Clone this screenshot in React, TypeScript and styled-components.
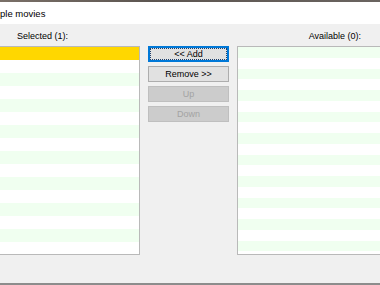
import React from "react";
import styled, { createGlobalStyle } from "styled-components";

const Global = createGlobalStyle`
  html, body { margin: 0; padding: 0; background: #f0f0f0; }
  body { font-family: "Liberation Sans", Arial, sans-serif; }
`;

const Screen = styled.div`
  width: 380px;
  height: 285px;
  overflow: hidden;
  display: flex;
  flex-direction: column;
  background: #f0f0f0;
`;

const TopStrip = styled.div`
  height: 2px;
  background: linear-gradient(90deg, #7a7068, #5c5550 40%, #6a6460);
`;

const TitleBar = styled.div`
  height: 22px;
  background: #ffffff;
  display: flex;
  align-items: center;
  font-size: 9.5px;
  color: #000;
  padding-left: 0;
`;

const Content = styled.div`
  flex: 1;
  display: grid;
  grid-template-columns: 140px 97px 160px;
  grid-template-rows: 22px 209px;
  background: #f0f0f0;
`;

const BottomLine = styled.div`
  height: 2px;
  background: #8c8c8c;
`;

const Label = styled.div<{ $align: "left" | "right" }>`
  font-size: 9px;
  color: #000;
  display: flex;
  align-items: flex-end;
  padding-bottom: 5px;
  justify-content: ${(p) => (p.$align === "left" ? "flex-start" : "flex-end")};
  padding-left: ${(p) => (p.$align === "left" ? "17px" : "0")};
  padding-right: ${(p) => (p.$align === "right" ? "18px" : "0")};
  box-sizing: border-box;
  width: ${(p) => (p.$align === "right" ? "142px" : "auto")};
`;

const ListBox = styled.div<{ $trimLeft?: boolean }>`
  border: 1px solid #b9b9b9;
  border-left-width: ${(p) => (p.$trimLeft ? "0" : "1px")};
  background: #ffffff;
  overflow: hidden;
  display: flex;
  flex-direction: column;
`;

const Row = styled.div<{ $h: number; $even: boolean; $selected?: boolean }>`
  flex: none;
  height: ${(p) => p.$h}px;
  background: ${(p) =>
    p.$selected ? "#ffd700" : p.$even ? "#f0fff0" : "#ffffff"};
`;

const ButtonColumn = styled.div`
  padding-left: 8px;
  padding-right: 8px;
  display: flex;
  flex-direction: column;
  gap: 4px;
`;

const Button = styled.button<{ $variant: "focus" | "normal" | "disabled" }>`
  position: relative;
  height: 16px;
  width: 81px;
  margin: 0;
  padding: 0;
  font-family: "Liberation Sans", Arial, sans-serif;
  font-size: 9px;
  line-height: 14px;
  text-align: center;
  cursor: default;
  color: ${(p) => (p.$variant === "disabled" ? "#a3a3a3" : "#000")};
  background: ${(p) => (p.$variant === "disabled" ? "#cccccc" : "#e1e1e1")};
  border: 1px solid
    ${(p) =>
      p.$variant === "focus"
        ? "#0078d7"
        : p.$variant === "disabled"
        ? "#bfbfbf"
        : "#adadad"};
  box-shadow: ${(p) => (p.$variant === "focus" ? "inset 0 0 0 1px #0078d7" : "none")};
  &::after {
    content: "";
    display: ${(p) => (p.$variant === "focus" ? "block" : "none")};
    position: absolute;
    inset: 1px;
    border: 1px dotted #1f3f6a;
  }
`;

const RightCell = styled.div`
  display: flex;
`;

const RightList = styled(ListBox)`
  width: 150px;
`;

export default function App() {
  const leftRows = Array.from({ length: 17 });
  const rightRows = Array.from({ length: 20 });
  return (
    <>
      <Global />
      <Screen>
        <TopStrip />
        <TitleBar>ple movies</TitleBar>
        <Content>
          <Label $align="left">Selected (1):</Label>
          <div />
          <Label $align="right">Available (0):</Label>
          <ListBox $trimLeft>
            {leftRows.map((_, i) => (
              <Row key={i} $h={13} $even={i % 2 === 0} $selected={i === 0} />
            ))}
          </ListBox>
          <ButtonColumn>
            <Button $variant="focus">&lt;&lt; Add</Button>
            <Button $variant="normal">Remove &gt;&gt;</Button>
            <Button $variant="disabled" disabled>
              Up
            </Button>
            <Button $variant="disabled" disabled>
              Down
            </Button>
          </ButtonColumn>
          <RightCell>
            <RightList>
              {rightRows.map((_, i) => (
                <Row key={i} $h={10.75} $even={i % 2 === 0} />
              ))}
            </RightList>
          </RightCell>
        </Content>
        <BottomLine />
      </Screen>
    </>
  );
}
